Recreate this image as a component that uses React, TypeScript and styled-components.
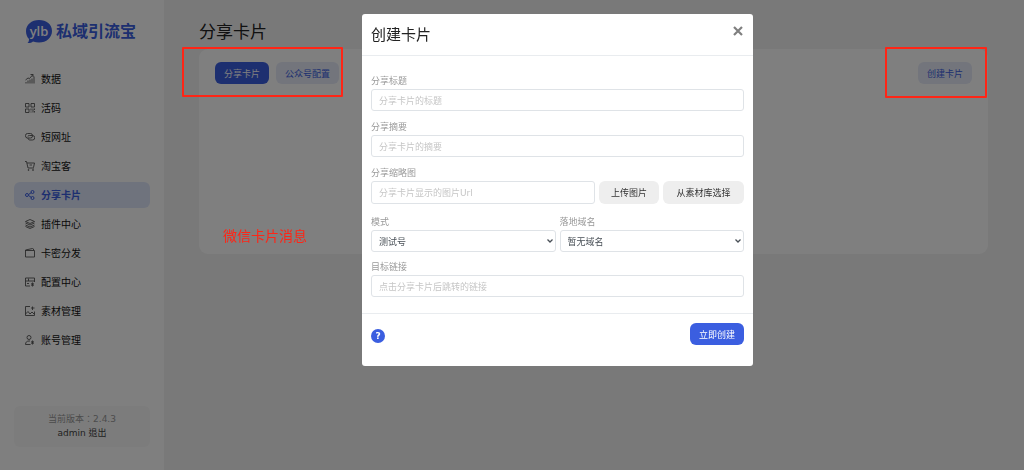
import React from 'react';
import styled, { createGlobalStyle } from 'styled-components';

const BLUE = '#3b5ee0';
const RED = '#ff2516';

const GlobalStyle = createGlobalStyle`
  *, *::before, *::after { box-sizing: border-box; }
  body {
    margin: 0;
    background: #f3f3f3;
    color: #222;
    font-family: "DejaVu Sans", "Noto Sans CJK SC", sans-serif;
    font-size: 9px;
    line-height: 14px;
  }
  button, input, select { font: inherit; }
`;

const Page = styled.div`
  position: relative;
  display: flex;
  min-height: 100vh;
`;

const Sidebar = styled.aside`
  display: flex;
  flex-direction: column;
  flex: 0 0 164px;
  padding: 18px 14px 23px;
  background: #fff;
`;

const Brand = styled.div`
  display: flex;
  align-items: center;
  gap: 3px;
  height: 28px;
  margin: 0 0 20px 11px;
  color: ${BLUE};
  font-size: 16px;
  font-weight: 700;
  line-height: 24px;
  white-space: nowrap;
`;

const Nav = styled.nav`
  display: flex;
  flex-direction: column;
  gap: 3px;
`;

const NavLink = styled.a<{ $active?: boolean }>`
  display: flex;
  align-items: center;
  gap: 6px;
  height: 26px;
  padding: 0 11px;
  border-radius: 6px;
  background: ${p => (p.$active ? '#dfe6fb' : 'transparent')};
  color: ${p => (p.$active ? BLUE : '#111')};
  font-size: 10px;
  font-weight: ${p => (p.$active ? 700 : 400)};
  line-height: 16px;
  text-decoration: none;

  svg { color: ${p => (p.$active ? BLUE : '#555')}; }
  span { padding-top: 2px; }
`;

const Version = styled.div`
  margin-top: auto;
  padding: 6px 0 7px;
  border-radius: 6px;
  background: #f8f8f8;
  color: #999;
  font-family: "DejaVu Sans", "Noto Sans CJK TC", sans-serif;
  text-align: center;
`;

const Account = styled.a`
  display: block;
  color: #444;
  text-decoration: none;
`;

const Main = styled.main`
  flex: 1;
  min-width: 0;
  padding: 20px 36px 0 35px;
`;

const PageTitle = styled.h1`
  margin: 0 0 5px;
  font-size: 17px;
  font-weight: 400;
  line-height: 24px;
`;

const Card = styled.section`
  display: flex;
  justify-content: space-between;
  align-items: flex-start;
  min-height: 205px;
  padding: 13px 16px;
  border-radius: 9px;
  background: #fff;
`;

const ButtonGroup = styled.div`
  display: flex;
  gap: 7px;
`;

const Button = styled.button<{ $kind?: 'primary' | 'soft' | 'plain' }>`
  height: 22px;
  padding: 1px 9px 0;
  border: 0;
  border-radius: 6px;
  white-space: nowrap;
  cursor: pointer;
  background: ${p => (p.$kind === 'primary' ? BLUE : p.$kind === 'soft' ? '#e6ebf9' : '#eee')};
  color: ${p => (p.$kind === 'primary' ? '#fff' : p.$kind === 'soft' ? BLUE : '#333')};
`;

const UploadButton = styled(Button)<{ $width: number }>`
  flex: 0 0 ${p => p.$width}px;
  height: 23px;
  padding: 1px 0 0;
`;

const Overlay = styled.div`
  position: fixed;
  inset: 0;
  display: flex;
  justify-content: center;
  align-items: flex-start;
  padding: 14px 0 14px 91px;
  background: rgba(0, 0, 0, 0.5);
`;

const Dialog = styled.form`
  width: 391px;
  border-radius: 3px;
  background: #fff;
`;

const DialogHeader = styled.header`
  display: flex;
  justify-content: space-between;
  align-items: flex-start;
  padding: 9px 9px 8px;
  border-bottom: 1px solid #e9ecef;
`;

const DialogTitle = styled.h2`
  margin: 0;
  font-size: 15px;
  font-weight: 400;
  line-height: 24px;
`;

const Close = styled.button`
  display: flex;
  padding: 3px 1px;
  border: 0;
  background: none;
  color: #7f7f7f;
  cursor: pointer;
`;

const DialogBody = styled.div`
  padding: 17px 9px 16px;
`;

const Field = styled.div<{ $gap?: number }>`
  margin-bottom: ${p => p.$gap ?? 8}px;
`;

const Label = styled.label`
  display: block;
  padding-top: 1px;
  color: #999;
  line-height: 15px;
`;

const Input = styled.input`
  display: block;
  width: 100%;
  min-width: 0;
  height: 22px;
  padding: 1px 7px 0;
  border: 1px solid #dfe3e7;
  border-radius: 3px;
  background: #fff;
  color: #495057;
  outline: none;

  &::placeholder { color: #c6c6c6; opacity: 1; }
`;

const UploadRow = styled.div`
  display: flex;
  gap: 4px;

  ${Input} { flex: 1; height: 23px; }
`;

const Columns = styled.div`
  display: grid;
  grid-template-columns: 1fr 1fr;
  gap: 4px;
`;

const SelectBox = styled.div`
  position: relative;

  svg {
    position: absolute;
    top: 8px;
    right: 2px;
    pointer-events: none;
  }
`;

const Select = styled.select`
  display: block;
  width: 100%;
  height: 22px;
  padding: 1px 7px 0;
  border: 1px solid #dfe3e7;
  border-radius: 3px;
  background: #fff;
  color: #495057;
  appearance: none;
  outline: none;
`;

const DialogFooter = styled.footer`
  display: flex;
  justify-content: space-between;
  align-items: flex-start;
  padding: 9px 9px 21px;
  border-top: 1px solid #e9ecef;
`;

const Help = styled.button`
  width: 14px;
  height: 14px;
  margin-top: 6px;
  padding: 0;
  border: 0;
  border-radius: 50%;
  background: ${BLUE};
  color: #fff;
  font-weight: 700;
  line-height: 14px;
  cursor: pointer;
`;

const Mark = styled.div`
  position: absolute;
  top: 47px;
  height: 50px;
  border: 2px solid ${RED};
  border-radius: 1px;
  pointer-events: none;
`;

const TabsMark = styled(Mark)`
  left: 182px;
  width: 161px;
`;

const CreateMark = styled(Mark)`
  right: 37px;
  width: 102px;
  height: 51px;
`;

const Note = styled.p`
  position: absolute;
  top: 226px;
  left: 223px;
  margin: 0;
  color: ${RED};
  font-size: 14px;
  line-height: 20px;
`;

const icons: Record<string, React.ReactNode> = {
  chart: (
    <>
      <path d="M2 19v-3M6 19v-6M10 19v-8M14 19V9M18 19V5" />
      <path d="M1 12 6 8l3 1 7-8M11 1h5v5" />
    </>
  ),
  code: (
    <>
      <path d="M1 1h7v7H1zM12 1h7v7h-7zM1 12h7v7H1z" />
      <path d="M12 11v4M12 17v2M16 11v8M19 11v3M19 16v3" />
    </>
  ),
  link: (
    <>
      <rect x="1" y="3" width="14" height="9" rx="4" />
      <path d="M6 9c0-2 1-2 3-2h6a4 4 0 0 1 0 9h-5c-3 0-4-2-4-4" />
    </>
  ),
  cart: (
    <>
      <path d="M0 1h3l3 13h12M4 4h15l-2 9M9 8h5" />
      <circle cx="7" cy="18" r="1" />
      <circle cx="16" cy="18" r="1" />
    </>
  ),
  share: (
    <>
      <circle cx="4" cy="10" r="3" />
      <circle cx="15" cy="4" r="3" />
      <circle cx="15" cy="16" r="3" />
      <path d="m7 9 6-4M7 11l6 4" />
    </>
  ),
  layers: (
    <>
      <path d="m10 1 9 4-9 4-9-4z" />
      <path d="m1 8 9 4 9-4M1 12l9 4 9-4M1 15l9 4 9-4" />
    </>
  ),
  wallet: <path d="M1 4v14h18V5H1zM1 4l14-3 2 1v3" />,
  config: (
    <>
      <path d="M10 18H1V2h18v8M1 8h18M7 8V3M4 13h4" />
      <path d="M15 11v8M12 13l6 4M18 13l-6 4" />
    </>
  ),
  image: (
    <>
      <path d="M10 1H1v18h18v-8" />
      <path d="m1 16 5-5 4 5 4-4 4 4M15 1v7M12 4h7" />
    </>
  ),
  user: (
    <>
      <circle cx="8" cy="5" r="4" />
      <path d="M11 19H1c0-5 3-7 7-7h2M15 11v8M12 13l6 4M18 13l-6 4" />
    </>
  ),
};

function Icon({ name }: { name: string }) {
  return (
    <svg
      width="10"
      height="10"
      viewBox="0 0 20 20"
      fill="none"
      stroke="currentColor"
      strokeWidth={name === 'share' ? 2 : 1.8}
      aria-hidden="true"
    >
      {icons[name]}
    </svg>
  );
}

function Logo() {
  return (
    <svg width="28" height="26" viewBox="0 0 28 26" role="img" aria-label="ylb">
      <path
        d="M14 1C6.500 1 1 5.800 1 12c0 3.500 1 6 3 8 0 2-.5 3-1.500 4 2 .3 4-.3 5.500-1.500 2 .7 4 1 6 1 7.500 0 13-4.800 13-11.500S21.500 1 14 1z"
        fill={BLUE}
      />
      <text x="14" y="17" fill="#fff" fontFamily="'Open Sans', sans-serif" fontSize="13" fontWeight="600" textAnchor="middle">
        ylb
      </text>
    </svg>
  );
}

function Chevron() {
  return (
    <svg width="8" height="6" viewBox="0 0 8 6" fill="none" stroke="#495057" strokeWidth="1.3" aria-hidden="true">
      <path d="m1.500 1.500 2.500 2.500 2.500-2.500" />
    </svg>
  );
}

const menu = [
  ['chart', '数据'],
  ['code', '活码'],
  ['link', '短网址'],
  ['cart', '淘宝客'],
  ['share', '分享卡片'],
  ['layers', '插件中心'],
  ['wallet', '卡密分发'],
  ['config', '配置中心'],
  ['image', '素材管理'],
  ['user', '账号管理'],
];

export default function App() {
  return (
    <>
      <GlobalStyle />
      <Page>
        <Sidebar>
          <Brand>
            <Logo />
            <span>私域引流宝</span>
          </Brand>
          <Nav>
            {menu.map(([icon, text]) => (
              <NavLink key={icon} href="#" $active={icon === 'share'}>
                <Icon name={icon} />
                <span>{text}</span>
              </NavLink>
            ))}
          </Nav>
          <Version>
            当前版本：2.4.3
            <Account href="#">admin 退出</Account>
          </Version>
        </Sidebar>

        <Main>
          <PageTitle>分享卡片</PageTitle>
          <Card>
            <ButtonGroup>
              <Button type="button" $kind="primary">分享卡片</Button>
              <Button type="button" $kind="soft">公众号配置</Button>
            </ButtonGroup>
            <Button type="button" $kind="soft">创建卡片</Button>
          </Card>
        </Main>

        <Overlay>
          <Dialog role="dialog" aria-labelledby="dialog-title" onSubmit={e => e.preventDefault()}>
            <DialogHeader>
              <DialogTitle id="dialog-title">创建卡片</DialogTitle>
              <Close type="button" aria-label="关闭">
                <svg width="10" height="10" viewBox="0 0 10 10" stroke="currentColor" strokeWidth="2.2" aria-hidden="true">
                  <path d="m1 1 8 8M9 1 1 9" />
                </svg>
              </Close>
            </DialogHeader>
            <DialogBody>
              <Field>
                <Label htmlFor="title">分享标题</Label>
                <Input id="title" placeholder="分享卡片的标题" />
              </Field>
              <Field>
                <Label htmlFor="summary">分享摘要</Label>
                <Input id="summary" placeholder="分享卡片的摘要" />
              </Field>
              <Field $gap={10}>
                <Label htmlFor="thumb">分享缩略图</Label>
                <UploadRow>
                  <Input id="thumb" placeholder="分享卡片显示的图片Url" />
                  <UploadButton type="button" $width={60}>上传图片</UploadButton>
                  <UploadButton type="button" $width={81}>从素材库选择</UploadButton>
                </UploadRow>
              </Field>
              <Field $gap={7}>
                <Columns>
                  <div>
                    <Label htmlFor="mode">模式</Label>
                    <SelectBox>
                      <Select id="mode"><option>测试号</option></Select>
                      <Chevron />
                    </SelectBox>
                  </div>
                  <div>
                    <Label htmlFor="domain">落地域名</Label>
                    <SelectBox>
                      <Select id="domain"><option>暂无域名</option></Select>
                      <Chevron />
                    </SelectBox>
                  </div>
                </Columns>
              </Field>
              <Field $gap={0}>
                <Label htmlFor="target">目标链接</Label>
                <Input id="target" placeholder="点击分享卡片后跳转的链接" />
              </Field>
            </DialogBody>
            <DialogFooter>
              <Help type="button">?</Help>
              <Button type="submit" $kind="primary">立即创建</Button>
            </DialogFooter>
          </Dialog>
        </Overlay>

        <TabsMark />
        <CreateMark />
        <Note>微信卡片消息</Note>
      </Page>
    </>
  );
}
